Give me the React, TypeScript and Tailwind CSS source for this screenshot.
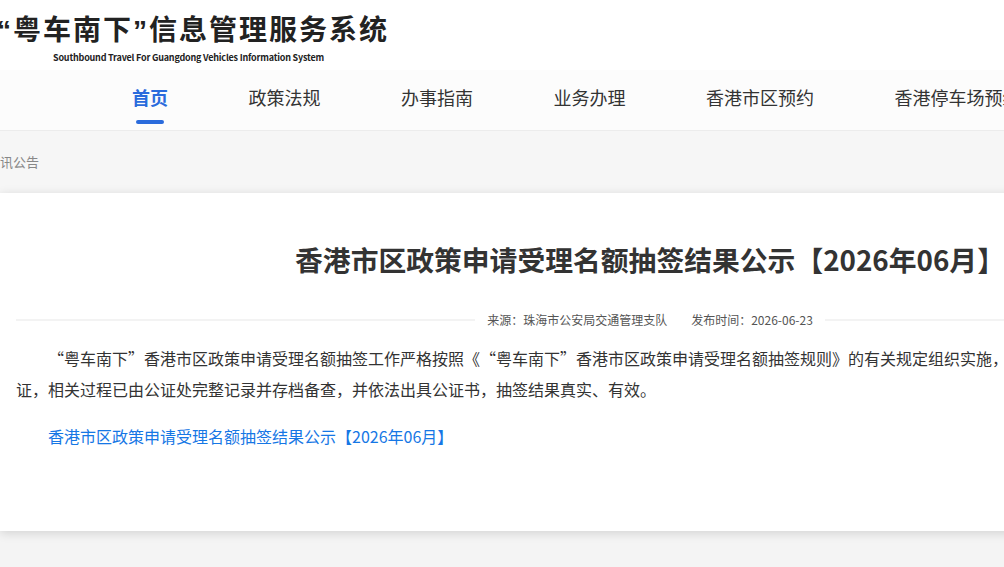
const navItems = ["首页", "政策法规", "办事指南", "业务办理", "香港市区预约", "香港停车场预约"];

function Header() {
  return (
    <header className="h-[70px] bg-white pt-[13px]">
      <h1 className="-ml-[3px] text-[28px] leading-[30px] font-bold tracking-[2px] text-[#222] whitespace-nowrap">
        <span className="font-['Liberation_Sans',sans-serif]">“</span>粤车南下
        <span className="font-['Liberation_Sans',sans-serif]">”</span>信息管理服务系统
      </h1>
      <p className="ml-[53px] mt-[6px] text-[9px] leading-[12px] font-bold text-[#222] whitespace-nowrap tracking-[-0.2px]">
        Southbound Travel For Guangdong Vehicles Information System
      </p>
    </header>
  );
}

function Nav() {
  return (
    <nav className="h-[61px] bg-[#fcfcfc] border-b border-[#ececec] pt-[15px]">
      <ul className="flex gap-[80.5px] pl-[132px]">
        {navItems.map((item, i) => (
          <li key={item} className="flex flex-col items-center">
            <span
              className={
                i === 0
                  ? "text-[18px] leading-[24px] font-bold text-[#2a6bdc] whitespace-nowrap"
                  : "text-[18px] leading-[24px] text-[#333] whitespace-nowrap"
              }
            >
              {item}
            </span>
            {i === 0 && <span className="mt-[11px] h-[4px] w-[28px] rounded-full bg-[#2a6bdc]" />}
          </li>
        ))}
      </ul>
    </nav>
  );
}

function Breadcrumb() {
  return (
    <div className="h-[62px] bg-[#f6f6f6] flex items-center">
      <span className="-ml-[13px] text-[13px] text-[#888]">资讯公告</span>
    </div>
  );
}

function Article() {
  return (
    <article className="bg-white shadow-[0_2px_10px_rgba(0,0,0,0.14)] px-[16px] pt-[46px] pb-[79px]">
      <h2 className="text-center text-[27.8px] leading-[40px] font-bold text-[#333] whitespace-nowrap">
        香港市区政策申请受理名额抽签结果公示【2026年06月】
      </h2>
      <div className="mt-[31px] h-[20px] flex items-center">
        <span className="flex-1 h-[2px] bg-[#f3f3f3]" />
        <div className="px-[12px] flex gap-[24px] text-[12px] leading-[20px] text-[#555] whitespace-nowrap">
          <span>来源：珠海市公安局交通管理支队</span>
          <span>发布时间：2026-06-23</span>
        </div>
        <span className="flex-1 h-[2px] bg-[#f3f3f3]" />
      </div>
      <p className="mt-[13px] w-[1272px] text-[16px] leading-[31px] text-[#333] indent-[32px] [text-spacing-trim:space-all]">
        “粤车南下”香港市区政策申请受理名额抽签工作严格按照《“粤车南下”香港市区政策申请受理名额抽签规则》的有关规定组织实施，并由珠海市横琴公证处全程进行现场公证，相关过程已由公证处完整记录并存档备查，并依法出具公证书，抽签结果真实、有效。
      </p>
      <p className="mt-[16px] indent-[32px] text-[16px] leading-[31px]">
        <a href="#" className="text-[#1677e5]">
          香港市区政策申请受理名额抽签结果公示【2026年06月】
        </a>
      </p>
    </article>
  );
}

export default function App() {
  return (
    <div className="w-[1004px] h-[567px] overflow-hidden bg-[#f4f4f4] font-['Noto_Sans_CJK_SC',sans-serif]">
      <div className="w-[1300px]">
        <Header />
        <Nav />
        <Breadcrumb />
        <Article />
      </div>
    </div>
  );
}
